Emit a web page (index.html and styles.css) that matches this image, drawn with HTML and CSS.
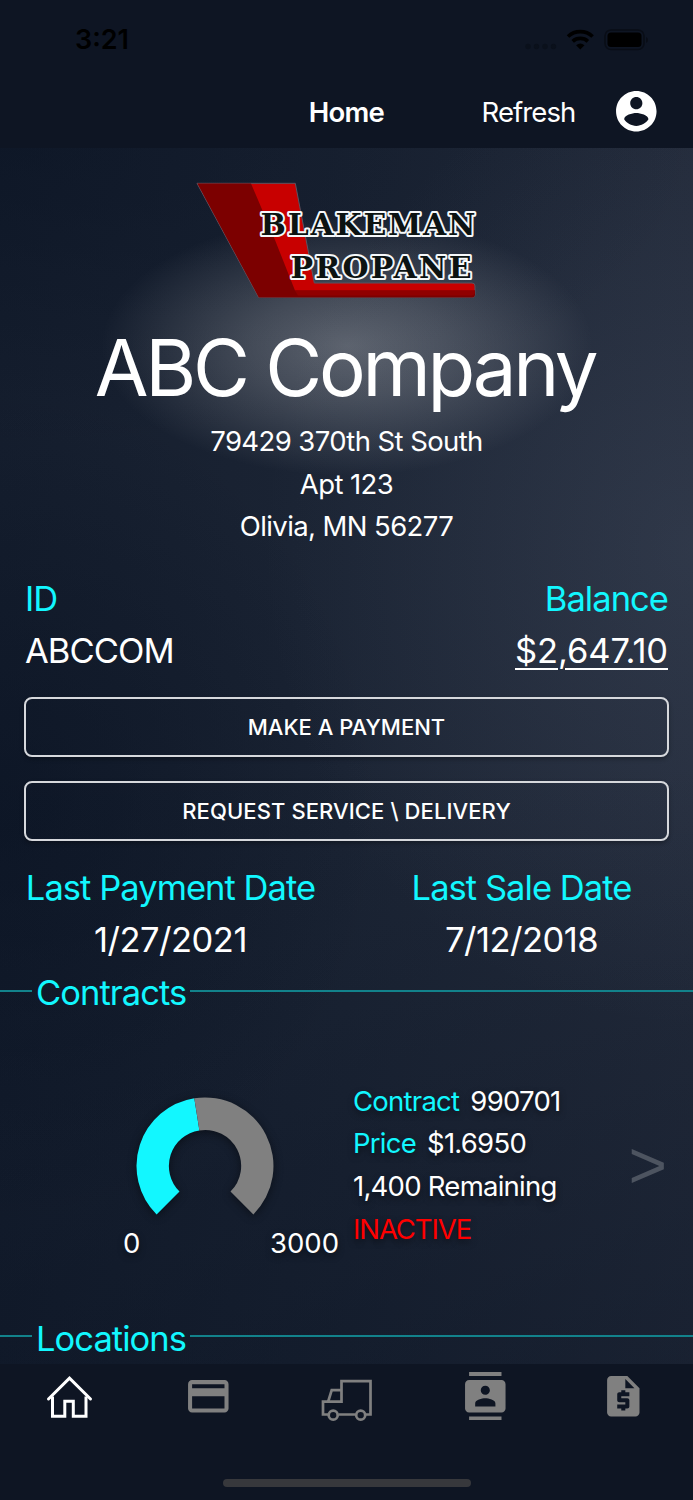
FILE: index.html
```html
<!doctype html>
<html lang="en">
    <head>
        <meta charset="utf-8">
        <title>Home</title>
        <link rel="stylesheet" href="styles.css">
    </head>
    <body>
        <header class="header">
            <div class="status">
                <span class="time">3:21</span>
                <svg class="status-icons" width="124" height="24" viewBox="0 0 124 24">
                    <g fill="#0a101b">
                        <circle cx="3" cy="18.5" r="2.7"/>
                        <circle cx="11.5" cy="18.5" r="2.7"/>
                        <circle cx="20" cy="18.5" r="2.7"/>
                        <circle cx="28.5" cy="18.5" r="2.7"/>
                    </g>
                    <g fill="none" stroke="#000" stroke-width="3.7">
                        <path d="M43 8.5a18 18 0 0 1 24.600 0"/>
                        <path d="M47.700 13.300a11.500 11.500 0 0 1 15.200 0"/>
                    </g>
                    <path d="M55.300 21.500l-4.200-4.300a6.500 6.500 0 0 1 8.400 0z"/>
                    <rect x="80" y="2" width="39" height="19.500" rx="6" fill="none" stroke="#090d16" stroke-width="1.600"/>
                    <rect x="82.500" y="4.500" width="34" height="14.500" rx="3.500"/>
                    <path d="M121 9v6q2-.8 2-3t-2-3z" fill="#090d16"/>
                </svg>
            </div>
            <div class="navbar">
                <h1>Home</h1>
                <div class="actions">
                    <span class="refresh">Refresh</span>
                    <svg width="48.600" height="48.600" viewBox="0 0 24 24" fill="#fff">
                        <path d="M12 2C6.480 2 2 6.480 2 12s4.480 10 10 10 10-4.480 10-10S17.520 2 12 2zm0 3c1.660 0 3 1.340 3 3s-1.340 3-3 3-3-1.340-3-3 1.340-3 3-3zm0 14.200c-2.500 0-4.710-1.280-6-3.220.03-1.990 4-3.080 6-3.080 1.990 0 5.970 1.090 6 3.080-1.290 1.940-3.500 3.220-6 3.220z"/>
                    </svg>
                </div>
            </div>
        </header>

        <main class="content">
            <svg class="logo" width="284" height="120" viewBox="194 180 284 120">
                <path d="M197 183.300h98.300l19 99.700h157.700q3 0 3 3v8.500q0 3-3 3H258.700z" fill="#c80000" stroke="#5d5360" stroke-width="1"/>
                <path d="M197.500 183.500H251L275 240l20 50.500h180v4q0 3-3 3H258.900z" fill="#7c0000"/>
                <path d="M295 290.500l3 5h174q3-.5 3-5z" fill="#900000"/>
                <g class="logo-text">
                    <text x="260.500" y="235" textLength="215" lengthAdjust="spacing">BLAKEMAN</text>
                    <text x="290.500" y="277.700" textLength="181" lengthAdjust="spacing">PROPANE</text>
                </g>
            </svg>
            <h2 class="company">ABC Company</h2>
            <div class="address">
                <div>79429 370th St South</div>
                <div>Apt 123</div>
                <div>Olivia, MN 56277</div>
            </div>

            <div class="account">
                <div>
                    <div class="label">ID</div>
                    <div class="account-id">ABCCOM</div>
                </div>
                <div class="balance">
                    <div class="label">Balance</div>
                    <div class="amount">$2,647.10</div>
                </div>
            </div>

            <div class="buttons">
                <button class="pay">MAKE A PAYMENT</button>
                <button class="request">REQUEST SERVICE \ DELIVERY</button>
            </div>

            <div class="dates">
                <div class="payment-date">
                    <div class="label">Last Payment Date</div>
                    <div class="date">1/27/2021</div>
                </div>
                <div class="sale-date">
                    <div class="label">Last Sale Date</div>
                    <div class="date">7/12/2018</div>
                </div>
            </div>

            <div class="section"><span>Contracts</span></div>
            <div class="contract">
                <div class="gauge">
                    <svg width="160" height="136" viewBox="-80 -80 160 136">
                        <path d="M-48.400 48.400A68.500 68.500 0 0 1-10.700-67.700L-5.600-35.600A36 36 0 0 0-25.500 25.500z" fill="#12f7ff"/>
                        <path d="M-10.700-67.700A68.500 68.500 0 0 1 48.400 48.400L25.500 25.500A36 36 0 0 0-5.600-35.600z" fill="#808080"/>
                    </svg>
                    <div class="range"><span>0</span><span>3000</span></div>
                </div>
                <div class="details">
                    <div><span class="key">Contract</span><span>990701</span></div>
                    <div><span class="key">Price</span><span>$1.6950</span></div>
                    <div>1,400 Remaining</div>
                    <div class="inactive">INACTIVE</div>
                </div>
                <div class="more">&gt;</div>
            </div>
            <div class="section locations"><span>Locations</span></div>
        </main>

        <footer class="tabs">
            <nav>
                <svg class="home" width="48" height="48" viewBox="0 0 48 48" fill="none" stroke="#fff" stroke-width="3">
                    <path d="M3.500 25L24.500 4.200 45.500 25" stroke-linecap="round"/>
                    <path d="M7.500 22.500v19.700h12.300V27.200h8.500v15h12.700V22.500"/>
                </svg>
                <svg width="48.600" height="48.600" viewBox="0 0 24 24">
                    <path d="M20 4H4c-1.110 0-1.990.89-1.990 2L2 18c0 1.110.89 2 2 2h16c1.110 0 2-.89 2-2V6c0-1.110-.89-2-2-2zm0 14H4v-6h16v6zm0-10H4V6h16v2z"/>
                </svg>
                <svg class="truck" width="52" height="48" viewBox="0 0 52 48" fill="none" stroke="#808080" stroke-width="2.700">
                    <path d="M7.500 39.500H2V26.700h18.500V6.200h29v33.300h-4.500M34.500 39.500h-17"/>
                    <path d="M7.200 26.500l3.500-11.300h9.800"/>
                    <circle cx="12.200" cy="40.200" r="4.500"/>
                    <circle cx="39.700" cy="40.200" r="4.500"/>
                </svg>
                <svg width="48.600" height="48.600" viewBox="0 0 24 24">
                    <path d="M20 0H4v2h16V0zM4 24h16v-2H4v2zM20 4H4c-1.100 0-2 .9-2 2v12c0 1.100.9 2 2 2h16c1.100 0 2-.9 2-2V6c0-1.100-.9-2-2-2zm-8 2.750c1.240 0 2.250 1.010 2.250 2.250s-1.010 2.250-2.250 2.250S9.750 10.240 9.750 9 10.760 6.750 12 6.750zM17 17H7v-1.500c0-1.670 3.330-2.500 5-2.500s5 .83 5 2.500V17z"/>
                </svg>
                <svg width="48.600" height="48.600" viewBox="0 0 24 24">
                    <path d="M14 2H6c-1.100 0-1.990.9-1.990 2L4 20c0 1.100.89 2 1.990 2H18c1.100 0 2-.9 2-2V8l-6-6zm1 10h-4v1h3c.55 0 1 .45 1 1v3c0 .55-.45 1-1 1h-1v1h-2v-1H9v-2h4v-1h-3c-.55 0-1-.45-1-1v-3c0-.55.45-1 1-1h1V9h2v1h2v2zm-2-4V3.500L17.500 8H13z"/>
                </svg>
            </nav>
            <div class="home-indicator"></div>
        </footer>
    </body>
</html>
```
FILE: styles.css
```css
* {
    box-sizing: border-box;
}
body {
    margin: 0;
    height: 1500px;
    overflow: hidden;
    display: flex;
    flex-direction: column;
    font-family: Inter, "Liberation Sans", sans-serif;
    font-size: 27.5px;
    color: #fff;
    background: #0e1523;
}
.header {
    height: 148px;
}
.status {
    height: 76px;
    padding: 0 44px 0 75px;
    display: flex;
    justify-content: space-between;
    align-items: center;
    color: #000;
}
.time {
    font-size: 27px;
    font-weight: 600;
    padding-top: 3px;
}
.status-icons {
    margin-top: 3px;
}
.navbar {
    height: 71px;
    display: grid;
    grid-template-columns: 1fr auto 1fr;
    align-items: center;
}
.navbar h1 {
    grid-column: 2;
    margin: 1px 0 0;
    font-size: 27.5px;
    font-weight: 600;
    letter-spacing: -.75px;
}
.actions {
    display: flex;
    justify-content: flex-end;
    align-items: center;
    gap: 37px;
    padding-right: 32px;
}
.refresh {
    padding-top: 1px;
    letter-spacing: -.9px;
}
.content {
    height: 1216px;
    overflow: hidden;
    padding-top: 32px;
    background:
        radial-gradient(ellipse 246px 130px at 347px 198px, rgba(255, 255, 255, .29), rgba(255, 255, 255, .19) 40%, rgba(255, 255, 255, .04) 88%, transparent),
        radial-gradient(ellipse 430px 480px at 100% 400px, rgba(110, 122, 145, .17), transparent),
        radial-gradient(ellipse 380px 420px at 0 660px, rgba(6, 15, 31, .5), transparent),
        radial-gradient(ellipse 700px 300px at 0 0, rgba(6, 15, 31, .45), transparent),
        linear-gradient(transparent 50%, rgba(6, 15, 31, .35)),
        linear-gradient(90deg, #151e2e, #1b2434 50%, #232b3b);
}
.logo {
    display: block;
    margin-left: 194px;
}
.logo-text {
    font: bold 30px "DejaVu Serif", serif;
    fill: #0c1312;
    stroke: #f5f8fa;
    stroke-width: 4px;
    stroke-linejoin: round;
    paint-order: stroke;
}
.company {
    margin: 20px 0 4px;
    padding-right: 3px;
    font-size: 78px;
    font-weight: 400;
    line-height: 96px;
    letter-spacing: -3.3px;
    text-align: center;
}
.address {
    line-height: 42.67px;
    letter-spacing: -.6px;
    text-align: center;
}
.account,
.dates,
.section {
    font-size: 34.5px;
    line-height: 52.3px;
    letter-spacing: -.95px;
}
.label,
.section {
    color: #12f7ff;
}
.account {
    display: flex;
    justify-content: space-between;
    margin-top: 25px;
    padding: 0 25px;
}
.balance {
    text-align: right;
}
.amount {
    letter-spacing: -.1px;
    text-decoration: underline;
    text-decoration-thickness: 2px;
    text-underline-offset: 5px;
}
.buttons {
    display: flex;
    flex-direction: column;
    gap: 24px;
    padding: 19px 24px 21px;
}
.buttons button {
    height: 60px;
    border: 2px solid #d6d8dc;
    border-radius: 8px;
    background: none;
    box-shadow: 0 2px 4px rgba(0, 0, 0, .3);
    color: #fff;
    font: 500 22px Inter, sans-serif;
}
.buttons .request {
    letter-spacing: .1px;
}
.dates {
    display: grid;
    grid-template-columns: 341px 1fr;
    text-align: center;
}
.date {
    letter-spacing: -.5px;
}
.sale-date {
    padding-left: 9px;
}
.section {
    display: flex;
    align-items: center;
    gap: 4px;
}
.section span {
    padding-top: 1px;
    margin-bottom: -1px;
}
.section::before,
.section::after {
    content: "";
    height: 2px;
    margin-top: -3px;
    background: #12828b;
}
.section::before {
    width: 32px;
}
.section::after {
    flex: 1;
}
.contract {
    display: grid;
    grid-template-columns: 353px 1fr auto;
    height: 293px;
    padding-top: 61px;
    text-shadow: 0 3px 6px rgba(0, 0, 0, .5);
}
.gauge svg {
    display: block;
    margin: 6px 0 0 125px;
    filter: drop-shadow(0 2px 5px rgba(0, 0, 0, .45));
}
.range {
    display: flex;
    justify-content: space-between;
    padding: 0 14px 0 123px;
    line-height: 42px;
}
.details {
    line-height: 42.67px;
    letter-spacing: -.75px;
}
.key {
    margin-right: 11px;
    color: #12f7ff;
}
.inactive {
    color: #f00;
    letter-spacing: -1.1px;
}
.more {
    padding-right: 26px;
    font-family: "Liberation Sans", sans-serif;
    font-size: 66px;
    line-height: 170px;
    color: #4d5460;
    text-shadow: none;
}
.tabs {
    height: 136px;
    background: #0e1523;
}
.tabs nav {
    height: 64px;
    display: grid;
    grid-template-columns: repeat(5, 1fr);
    justify-items: center;
    align-items: center;
    fill: #808080;
}
.home {
    margin-top: 3px;
}
.truck {
    margin: 5px 0 0 1px;
}
.home-indicator {
    width: 248px;
    height: 8px;
    margin: 51px auto 0;
    border-radius: 4px;
    background: #37383c;
}
```
